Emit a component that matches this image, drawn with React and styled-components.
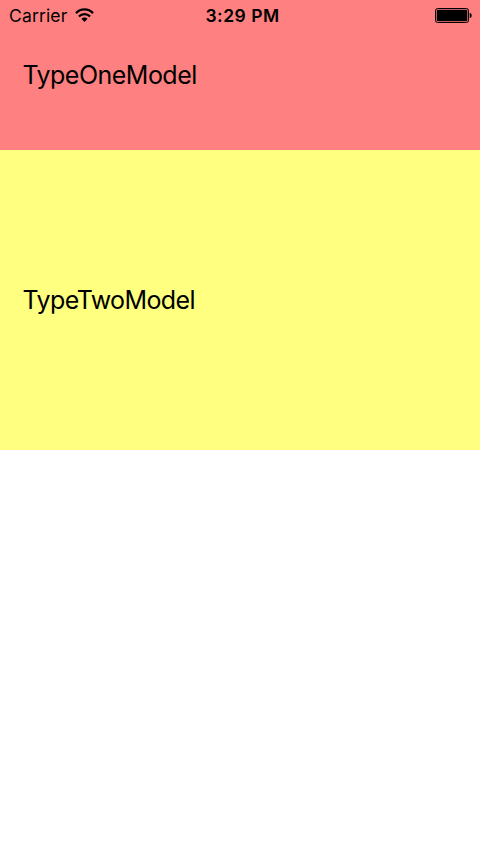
import React from "react";
import styled, { createGlobalStyle } from "styled-components";

const GlobalStyle = createGlobalStyle`
  body { margin: 0; background: #fff; font-family: Inter, "Liberation Sans", sans-serif; color: #000; }
`;
const Screen = styled.main`
  width: 480px;
  height: 852px;
  overflow: hidden;
  background: #fff;
`;
const StatusBar = styled.header`
  display: grid;
  grid-template-columns: 1fr auto 1fr;
  align-items: center;
  height: 30px;
  padding: 0 8px 0 9px;
  box-sizing: border-box;
  background: #ff8080;
  font-size: 17.5px;
  line-height: 28px;
`;
const Network = styled.div`
  display: flex;
  align-items: center;
  gap: 8px;
`;
const Carrier = styled.span`
  letter-spacing: 0.15px;
  padding-top: 2px;
`;
const Clock = styled.time`
  font-weight: 600;
  letter-spacing: 0.5px;
  padding: 2px 0 0 4px;
`;
const WifiIcon = styled.svg`
  margin-bottom: 1px;
`;
const Battery = styled.svg`
  justify-self: end;
`;
const Cell = styled.section`
  display: flex;
  align-items: center;
  box-sizing: border-box;
  height: ${(p) => p.$height}px;
  padding: 0 0 0 22.5px;
  background: ${(p) => p.$color};
`;
const Label = styled.span`
  font-size: 25px;
  line-height: 30px;
  letter-spacing: ${(p) => p.$tracking}px;
`;
const FirstCell = styled(Cell)`
  align-items: flex-start;
  padding-top: 30px;
`;

export default function App() {
  return (
    <Screen>
      <GlobalStyle />
      <StatusBar>
        <Network>
          <Carrier>Carrier</Carrier>
          <WifiIcon width="19" height="14" viewBox="0 0 20 14" preserveAspectRatio="none" fill="none" stroke="#000" strokeWidth="2.3">
            <path d="M1 5.1a12.7 12.7 0 0 1 18 0M4.1 8.5a8.3 8.3 0 0 1 11.8 0" />
            <path d="M10 14 6.8 10.800a4.500 4.500 0 0 1 6.400 0z" fill="#000" stroke="none" />
          </WifiIcon>
        </Network>
        <Clock>3:29 PM</Clock>
        <Battery width="37" height="15" viewBox="0 0 37 15">
          <rect x=".5" y=".5" width="33" height="14" rx="2" fill="none" stroke="#000" />
          <rect x="1.7" y="1.7" width="30.6" height="11.6" rx=".7" />
          <path d="M34.700 5c2.700.3 2.700 4.700 0 5z" />
        </Battery>
      </StatusBar>
      <FirstCell $height={120} $color="#ff8080"><Label $tracking={-0.52}>TypeOneModel</Label></FirstCell>
      <Cell $height={300} $color="#ffff80"><Label $tracking={-0.6}>TypeTwoModel</Label></Cell>
    </Screen>
  );
}
